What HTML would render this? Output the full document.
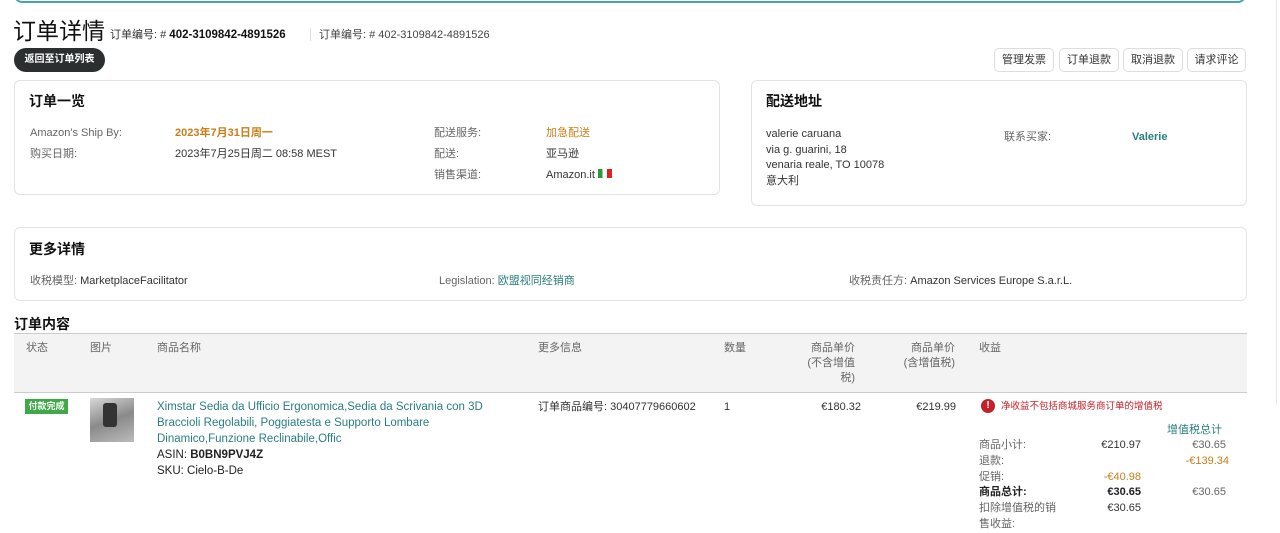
<!DOCTYPE html>
<html><head><meta charset="utf-8"><style>
*{margin:0;padding:0;box-sizing:border-box}
body{width:1280px;height:532px;overflow:hidden;background:#fff;font-family:"Liberation Sans","Noto Sans CJK SC",sans-serif;color:#333;font-size:11px;position:relative}
.a{position:absolute;white-space:nowrap;line-height:14px}
.card{position:absolute;border:1px solid #e3e3e3;border-radius:6px;background:#fff}
.btn{position:absolute;top:48px;height:24px;border:1px solid #ddd;border-radius:5px;font-size:11px;line-height:22px;text-align:center;color:#333;background:#fff}
.g{color:#666}
.h{font-size:14px;font-weight:bold;color:#111;line-height:18px}
.t{color:#2a7f80}
.or{color:#c97e1a}
.r{text-align:right}
</style></head><body>
<div class="a" style="left:14px;top:-20px;width:1232px;height:23px;border:2px solid #4aa5a8;border-top:none;border-radius:0 0 8px 8px"></div>
<div class="a" style="left:1276px;top:0;width:1px;height:405px;background:#e6e6e6"></div>

<div class="a" style="left:13px;top:16px;font-size:23px;line-height:30px;color:#111">订单详情</div>
<div class="a" style="left:110px;top:28px;font-size:11px;color:#333">订单编号: # <b style="color:#111;font-size:11.5px">402-3109842-4891526</b></div>
<div class="a" style="left:310px;top:28px;width:1px;height:13px;background:#ddd"></div>
<div class="a" style="left:319px;top:28px;font-size:11px;color:#444">订单编号: # 402-3109842-4891526</div>
<div class="a" style="left:14px;top:48px;width:91px;height:24px;background:#2b2f30;border-radius:12px;color:#fff;font-size:10px;font-weight:bold;text-align:center;line-height:24px">返回至订单列表</div>

<div class="btn" style="left:994px;width:60px">管理发票</div>
<div class="btn" style="left:1059px;width:60px">订单退款</div>
<div class="btn" style="left:1123px;width:60px">取消退款</div>
<div class="btn" style="left:1187px;width:59px">请求评论</div>

<div class="card" style="left:14px;top:80px;width:706px;height:115px"></div>
<div class="a h" style="left:29px;top:92px">订单一览</div>
<div class="a g" style="left:30px;top:126px">Amazon's Ship By:</div>
<div class="a or" style="left:175px;top:126px;font-weight:bold">2023年7月31日周一</div>
<div class="a g" style="left:30px;top:147px">购买日期:</div>
<div class="a" style="left:175px;top:147px">2023年7月25日周二 08:58 MEST</div>
<div class="a g" style="left:434px;top:126px">配送服务:</div>
<div class="a or" style="left:546px;top:126px">加急配送</div>
<div class="a g" style="left:434px;top:147px">配送:</div>
<div class="a" style="left:546px;top:147px">亚马逊</div>
<div class="a g" style="left:434px;top:168px">销售渠道:</div>
<div class="a" style="left:546px;top:168px">Amazon.it <span style="display:inline-block;width:14px;height:9px;background:linear-gradient(90deg,#2a9a3a 33%,#fff 33% 66%,#d22 66%);vertical-align:0"></span></div>

<div class="card" style="left:751px;top:80px;width:496px;height:126px"></div>
<div class="a h" style="left:766px;top:92px">配送地址</div>
<div class="a" style="left:766px;top:127px;line-height:15.5px">valerie caruana<br>via g. guarini, 18<br>venaria reale, TO 10078<br>意大利</div>
<div class="a g" style="left:1004px;top:130px">联系买家:</div>
<div class="a t" style="left:1132px;top:130px;font-weight:bold">Valerie</div>

<div class="card" style="left:14px;top:227px;width:1233px;height:74px"></div>
<div class="a h" style="left:29px;top:240px">更多详情</div>
<div class="a" style="left:30px;top:274px"><span class="g">收税模型:</span> MarketplaceFacilitator</div>
<div class="a" style="left:439px;top:274px"><span class="g">Legislation:</span> <span class="t">欧盟视同经销商</span></div>
<div class="a" style="left:849px;top:274px"><span class="g">收税责任方:</span> Amazon Services Europe S.a.r.L.</div>

<div class="a h" style="left:14px;top:315px">订单内容</div>
<div class="a" style="left:14px;top:333px;width:1233px;height:60px;background:#f3f3f3;border-top:1px solid #ccc;border-bottom:1px solid #ccc"></div>
<div class="a g" style="left:26px;top:341px">状态</div>
<div class="a g" style="left:90px;top:341px">图片</div>
<div class="a g" style="left:157px;top:341px">商品名称</div>
<div class="a g" style="left:538px;top:341px">更多信息</div>
<div class="a g" style="left:724px;top:341px">数量</div>
<div class="a g r" style="left:795px;top:341px;width:60px;line-height:15px">商品单价<br>(不含增值<br>税)</div>
<div class="a g r" style="left:893px;top:341px;width:62px;line-height:15px">商品单价<br>(含增值税)</div>
<div class="a g" style="left:979px;top:341px">收益</div>

<div class="a" style="left:25px;top:399px;width:43px;height:15px;background:#3fa94a;color:#fff;font-size:9px;font-weight:bold;text-align:center;line-height:15px">付款完成</div>
<div class="a" style="left:90px;top:398px;width:44px;height:44px;background:linear-gradient(160deg,#d8d8d8,#8a8a8a 50%,#bbb)"></div>
<div class="a" style="left:103px;top:403px;width:14px;height:24px;background:#333;border-radius:3px"></div>
<div class="a t" style="left:157px;top:399px;line-height:16px;font-size:11.5px">Ximstar Sedia da Ufficio Ergonomica,Sedia da Scrivania con 3D<br>Braccioli Regolabili, Poggiatesta e Supporto Lombare<br>Dinamico,Funzione Reclinabile,Offic</div>
<div class="a" style="left:157px;top:447px;line-height:16px;font-size:11.5px;color:#222">ASIN: <b>B0BN9PVJ4Z</b><br>SKU: Cielo-B-De</div>
<div class="a" style="left:538px;top:400px">订单商品编号: 30407779660602</div>
<div class="a" style="left:724px;top:400px">1</div>
<div class="a r" style="left:795px;top:400px;width:66px">€180.32</div>
<div class="a r" style="left:890px;top:400px;width:66px">€219.99</div>
<div class="a" style="left:981px;top:399px;width:14px;height:14px;border-radius:50%;background:#c4202a;color:#fff;font-size:10px;font-weight:bold;text-align:center;line-height:14px">!</div>
<div class="a" style="left:1001px;top:400px;font-size:9.5px;color:#c4202a">净收益不包括商城服务商订单的增值税</div>
<div class="a t" style="left:1167px;top:423px">增值税总计</div>
<div class="a g" style="left:979px;top:438px;line-height:15.8px">商品小计:<br>退款:<br>促销:<br><b style="color:#222">商品总计:</b><br>扣除增值税的销<br>售收益:</div>
<div class="a r" style="left:1070px;top:438px;width:71px;line-height:15.8px">€210.97<br>&nbsp;<br><span class="or">-€40.98</span><br><b style="color:#222">€30.65</b><br>€30.65</div>
<div class="a r g" style="left:1150px;top:438px;width:79px;line-height:15.8px">€30.65&nbsp;<br><span class="or">-€139.34</span><br>&nbsp;<br>€30.65&nbsp;</div>
</body></html>
